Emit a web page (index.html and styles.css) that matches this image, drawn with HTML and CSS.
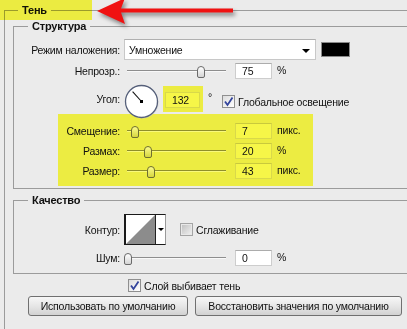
FILE: index.html
```html
<!DOCTYPE html>
<html lang="ru">
<head>
    <meta charset="UTF-8">
    <title>Тень</title>
    <link rel="stylesheet" href="styles.css">
</head>
<body>
    <span class="legend-mark"></span>
    <svg class="pointer" width="250" height="30" viewBox="0 0 250 30">
        <polygon points="97,11 125,-2 121,8.5 233,8.5 233,12.5 121,12.5 125,24" fill="#f01212"/>
    </svg>

    <fieldset class="group shadow">
        <legend>Тень</legend>

        <fieldset class="group structure">
            <legend>Структура</legend>

            <div class="row row-blend">
                <span class="lbl">Режим наложения:</span>
                <div class="select">Умножение<span class="caret"></span></div>
                <span class="swatch"></span>
            </div>

            <div class="row row-gap">
                <span class="lbl">Непрозр.:</span>
                <div class="slider"><span class="thumb" style="left:70px"></span></div>
                <span class="num">75</span>
                <span class="unit">%</span>
            </div>

            <div class="row row-angle">
                <span class="lbl">Угол:</span>
                <svg class="dial" width="35" height="35" viewBox="0 0 35 35">
                    <circle cx="18.5" cy="18.5" r="16" fill="#c9c9c9" opacity="0.6"/>
                    <circle cx="17.5" cy="17.5" r="16" fill="#fff" stroke="#56607a" stroke-width="1.3"/>
                    <line x1="17.5" y1="17.5" x2="8.6" y2="7.6" stroke="#111" stroke-width="1.1"/>
                    <rect x="16" y="16" width="3" height="3" fill="#000"/>
                </svg>
                <span class="mark"><span class="num">132</span></span>
                <span class="deg">°</span>
                <span class="check">
                    <span class="box on">
                        <svg width="11" height="11" viewBox="0 0 11 11"><path d="M2 5.5 L4.5 9 L9.5 1.5" fill="none" stroke="#33449c" stroke-width="1.8"/></svg>
                    </span>
                    Глобальное освещение
                </span>
            </div>

            <div class="marked">
                <div class="row">
                    <span class="lbl">Смещение:</span>
                    <div class="slider"><span class="thumb" style="left:4px"></span></div>
                    <span class="num">7</span>
                    <span class="unit">пикс.</span>
                </div>
                <div class="row row-step">
                    <span class="lbl">Размах:</span>
                    <div class="slider"><span class="thumb" style="left:17px"></span></div>
                    <span class="num">20</span>
                    <span class="unit">%</span>
                </div>
                <div class="row row-step">
                    <span class="lbl">Размер:</span>
                    <div class="slider"><span class="thumb" style="left:20px"></span></div>
                    <span class="num">43</span>
                    <span class="unit">пикс.</span>
                </div>
            </div>
        </fieldset>

        <fieldset class="group quality">
            <legend>Качество</legend>

            <div class="row row-contour">
                <span class="lbl">Контур:</span>
                <div class="contour">
                    <svg class="curve" width="29" height="29" viewBox="0 0 29 29">
                        <polygon points="0,29 29,0 29,29" fill="#8c8c8c"/>
                    </svg>
                    <span class="contour-caret"></span>
                </div>
                <span class="check smooth">
                    <span class="box"></span>
                    Сглаживание
                </span>
            </div>

            <div class="row row-noise">
                <span class="lbl">Шум:</span>
                <div class="slider"><span class="thumb" style="left:-3px"></span></div>
                <span class="num">0</span>
                <span class="unit">%</span>
            </div>
        </fieldset>

        <div class="knock">
            <span class="check">
                <span class="box on">
                    <svg width="11" height="11" viewBox="0 0 11 11"><path d="M2 5.5 L4.5 9 L9.5 1.5" fill="none" stroke="#33449c" stroke-width="1.8"/></svg>
                </span>
                Слой выбивает тень
            </span>
        </div>

        <div class="buttons">
            <button class="btn btn-use">Использовать по умолчанию</button>
            <button class="btn btn-reset">Восстановить значения по умолчанию</button>
        </div>
    </fieldset>
</body>
</html>
```

FILE: styles.css
```css
* {
    box-sizing: border-box;
}
html, body {
    margin: 0;
}
body {
    position: relative;
    width: 407px;
    height: 329px;
    overflow: hidden;
    background: #ebebeb;
    font: 10.5px "Liberation Sans", Arial, sans-serif;
    letter-spacing: -0.2px;
    color: #111;
}

/* highlight marks and arrow drawn over the dialog */
.legend-mark {
    position: absolute;
    left: 0;
    top: 0;
    width: 92px;
    height: 20px;
    background: #ffff46;
    mix-blend-mode: multiply;
    z-index: 2;
}
.pointer {
    position: absolute;
    left: 0;
    top: 0;
    overflow: visible;
    filter: drop-shadow(2px 3px 2px rgba(0, 0, 0, 0.45));
    z-index: 3;
}

/* group boxes */
.group {
    margin: 0;
    padding: 0;
    min-width: 0;
    border: 1px solid #9b9b9b;
    border-right: 0;
}
.group legend {
    margin-left: 14px;
    padding: 0 4px;
    font-weight: bold;
    font-size: 11px;
    line-height: 13px;
}
.shadow {
    margin-left: 4px;
    padding: 0 0 20px 8px;
    border-bottom: 0;
}
.shadow > legend {
    margin-left: 5px;
    line-height: 20px;
}
.structure {
    padding: 6px 0 2px;
}
.quality {
    margin-top: 5px;
    padding: 7px 0;
}

/* rows */
.row {
    display: flex;
    align-items: center;
    height: 16px;
}
.lbl {
    flex: none;
    width: 106px;
    text-align: right;
}
.row-blend {
    height: 21px;
}
.row-gap {
    margin-top: 3px;
}
.row-angle {
    align-items: flex-start;
    height: 30px;
    margin-top: 5px;
}
.row-angle .lbl {
    line-height: 30px;
}
.row-step {
    margin-top: 4px;
}
.row-contour {
    height: 31px;
}
.row-noise {
    margin-top: 5px;
}

.select {
    position: relative;
    width: 192px;
    height: 21px;
    margin-left: 4px;
    padding: 4px 0 0 4px;
    background: #fff;
    border: 1px solid #c8c8c8;
    border-top-color: #b0b0b0;
}
.caret {
    position: absolute;
    right: 5px;
    top: 9px;
    border-left: 4px solid transparent;
    border-right: 4px solid transparent;
    border-top: 4px solid #000;
}
.swatch {
    width: 29px;
    height: 15px;
    margin-left: 5px;
    background: #000;
    border: 1px solid #8a8a8a;
}

.slider {
    position: relative;
    flex: none;
    width: 99px;
    height: 2px;
    margin-left: 7px;
    border-top: 1px solid #8e8e8e;
    border-bottom: 1px solid rgba(255, 255, 255, 0.7);
}
.thumb {
    position: absolute;
    top: -5px;
    width: 8px;
    height: 12px;
    border: 1px solid #6a6a6a;
    border-radius: 4px 4px 2px 2px;
    background: linear-gradient(#ffffff, #d4d4d4);
}
.num {
    flex: none;
    width: 37px;
    height: 16px;
    margin-left: 9px;
    padding-left: 6px;
    line-height: 14px;
    background: #fff;
    border: 1px solid #cdcdcd;
    border-top-color: #acacac;
}
.unit {
    margin-left: 5px;
    margin-top: -2px;
}

/* angle */
.dial {
    flex: none;
    margin-left: 4px;
    overflow: visible;
}
.mark {
    margin: 2px 0 0 4px;
    padding: 6px 3px 4px 2px;
    background: #ecec42;
}
.mark .num {
    display: block;
    width: 35px;
    margin: 0;
    padding-left: 6px;
    background: #f6f648;
    border-color: #d9d94a;
}
.deg {
    margin: 7px 0 0 5px;
}
.row-angle .check {
    margin: 11px 0 0 10px;
}

.check {
    display: flex;
    align-items: center;
    height: 13px;
    gap: 3px;
}
.box {
    display: flex;
    align-items: center;
    justify-content: center;
    width: 13px;
    height: 13px;
    border: 1px solid #8f8f8f;
    background: linear-gradient(135deg, #dcdcdc, #ffffff);
}
.smooth {
    margin-left: 14px;
}
.smooth .box {
    border-color: #a4a4a4;
    background: linear-gradient(135deg, #bdbdbd, #f2f2f2);
    box-shadow: inset 0 0 0 1px #e8e8e8;
}

/* highlighted group of sliders */
.marked {
    width: 255px;
    margin-left: 44px;
    padding: 9px 0 7px;
    background: #ecec42;
}
.marked .lbl {
    width: 62px;
}
.marked .num {
    background: #f6f648;
    border-color: #d9d94a;
    border-top-color: #c9c93c;
}
.marked .slider {
    border-top-color: #8f8f2a;
    border-bottom-color: rgba(255, 255, 150, 0.7);
}
.marked .thumb {
    border-color: #6e6e30;
    background: linear-gradient(#fbfb8a, #d6d640);
}

/* contour */
.contour {
    display: flex;
    width: 42px;
    height: 31px;
    margin-left: 4px;
    background: #fff;
    border: 1px solid #1a1a1a;
    border-left-width: 2px;
    border-right-color: #999;
}
.curve {
    display: block;
    border-right: 1px solid #222;
    width: 30px;
    height: 29px;
}
.contour-caret {
    flex: 1;
    display: flex;
    align-items: center;
    justify-content: center;
}
.contour-caret::after {
    content: "";
    border-left: 3px solid transparent;
    border-right: 3px solid transparent;
    border-top: 3px solid #000;
}

.knock {
    height: 13px;
    margin-top: 5px;
    padding-left: 115px;
}

.buttons {
    display: flex;
    gap: 7px;
    margin: 4px 0 0 15px;
}
.btn {
    height: 20px;
    padding: 0;
    font: 10.5px "Liberation Sans", Arial, sans-serif;
    letter-spacing: -0.2px;
    color: #111;
    border: 1px solid #707070;
    border-radius: 3px;
    background: linear-gradient(#f7f7f7, #e6e6e6 50%, #d2d2d2);
}
.btn-use {
    width: 160px;
}
.btn-reset {
    width: 207px;
}
```
